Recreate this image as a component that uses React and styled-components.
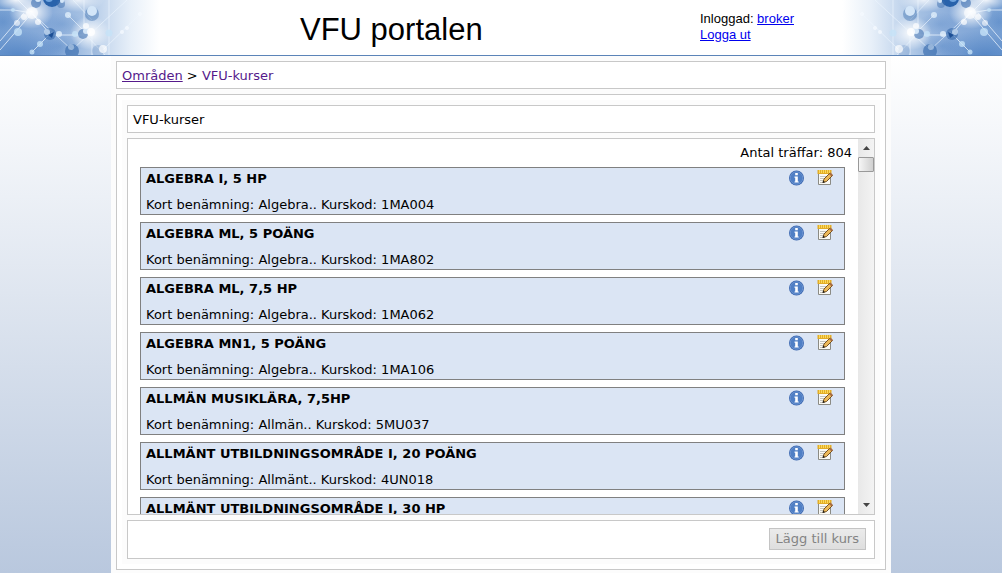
import React, { useRef } from "react";
import styled, { createGlobalStyle } from "styled-components";

const GlobalStyle = createGlobalStyle`
  * {
    box-sizing: border-box;
  }
  html {
    height: 100%;
  }
  body {
    margin: 0;
    min-height: 100%;
    font-family: "DejaVu Sans", Verdana, sans-serif;
    font-size: 13px;
    line-height: 16px;
    color: #000;
  }
`;

const Page = styled.div`
  height: 100vh;
  min-height: 400px;
  overflow: hidden;
  display: flex;
  flex-direction: column;
  background: linear-gradient(#fff 56px, #b9c8de);
`;

const Header = styled.header`
  flex: none;
  display: flex;
  justify-content: space-between;
  height: 56px;
  background: #fff;
  border-bottom: 1px solid #5b84b8;
`;

const Art = styled.svg`
  flex: none;
  width: 168px;
  height: 55px;
  transform: ${(p) => (p.$flip ? "scaleX(-1)" : "none")};
`;

const HeaderInner = styled.div`
  flex: 1;
  max-width: 666px;
  display: flex;
  justify-content: space-between;
  font-family: "Liberation Sans", Arial, sans-serif;
`;

const SiteTitle = styled.h1`
  margin: 0 0 0 132px;
  font-size: 31px;
  line-height: 60px;
  font-weight: normal;
  white-space: nowrap;
`;

const Login = styled.div`
  width: 134px;
  padding-top: 11px;
  font-size: 13px;
  line-height: 16px;

  a {
    color: #0000ee;
  }
`;

const Container = styled.main`
  flex: 1;
  min-height: 0;
  width: 100%;
  max-width: 780px;
  margin: 0 auto;
  padding: 5px 5px 3px;
  display: flex;
  flex-direction: column;
  gap: 5px;
  background: #fcfcfc;
`;

const Box = styled.div`
  border: 1px solid #c8c8c8;
  background: #fff;
`;

const Bar = styled(Box)`
  flex: none;
  padding: 6px 5px 4px;
`;

const Crumb = styled.a`
  color: #551a8b;
  text-decoration: ${(p) => (p.$current ? "none" : "underline")};
`;

const Frame = styled(Box)`
  flex: 1;
  min-height: 0;
  padding: 5px;
  display: flex;
`;

const Panel = styled.section`
  flex: 1;
  min-width: 0;
  padding: 5px;
  display: flex;
  flex-direction: column;
  gap: 5px;
  background: #fcfcfc;
`;

const PanelTitle = styled.h2`
  margin: 0;
  font-size: 13px;
  font-weight: normal;
`;

const ListBox = styled(Box)`
  flex: 1;
  min-height: 0;
  display: flex;
`;

const ListView = styled.div`
  flex: 1;
  min-width: 0;
  overflow-y: auto;
  scrollbar-width: none;
  padding: 6px 0 0 12px;
`;

const Hits = styled.p`
  margin: 0 6px 6px 0;
  text-align: right;
`;

const Courses = styled.ul`
  list-style: none;
  margin: 0 13px 0 0;
  padding: 0;
  display: flex;
  flex-direction: column;
  gap: 7px;
`;

const Course = styled.li`
  display: flex;
  justify-content: space-between;
  height: 48px;
  padding: 2px 11px 0 5px;
  border: 1px solid #808080;
  background: #dbe5f4;
`;

const CourseText = styled.div`
  padding-top: 1px;
`;

const CourseName = styled.h3`
  margin: 0 0 10px;
  font-size: 13px;
  font-weight: bold;
`;

const CourseInfo = styled.p`
  margin: 0;
`;

const Actions = styled.div`
  display: flex;
  gap: 13px;
`;

const IconButton = styled.button`
  width: 16px;
  height: 16px;
  padding: 0;
  border: 0;
  background: none;
  cursor: pointer;

  svg {
    display: block;
  }
`;

const Scrollbar = styled.div`
  flex: none;
  width: 16px;
  display: flex;
  flex-direction: column;
  background: linear-gradient(90deg, #e8e8e8, #f3f3f3);
`;

const ScrollArrow = styled.button`
  height: 18px;
  padding: 0;
  border: 0;
  background: none;
  display: flex;
  align-items: center;
  justify-content: center;
`;

const Track = styled.div`
  flex: 1;
`;

const Thumb = styled.div`
  height: 15px;
  border: 1px solid #999;
  border-radius: 1px;
  background: linear-gradient(90deg, #f6f6f6, #cfcfcf);
`;

const Footer = styled(Box)`
  flex: none;
  display: flex;
  justify-content: flex-end;
  padding: 7px 8px 8px;
`;

const AddButton = styled.button`
  height: 22px;
  padding: 0 6px;
  border: 1px solid #c4c4c4;
  background: linear-gradient(#ebebeb, #dedede);
  color: #838383;
  font: inherit;
`;

const courses = [
  { name: "ALGEBRA I, 5 HP", info: "Kort benämning: Algebra.. Kurskod: 1MA004" },
  { name: "ALGEBRA ML, 5 POÄNG", info: "Kort benämning: Algebra.. Kurskod: 1MA802" },
  { name: "ALGEBRA ML, 7,5 HP", info: "Kort benämning: Algebra.. Kurskod: 1MA062" },
  { name: "ALGEBRA MN1, 5 POÄNG", info: "Kort benämning: Algebra.. Kurskod: 1MA106" },
  { name: "ALLMÄN MUSIKLÄRA, 7,5HP", info: "Kort benämning: Allmän.. Kurskod: 5MU037" },
  { name: "ALLMÄNT UTBILDNINGSOMRÅDE I, 20 POÄNG", info: "Kort benämning: Allmänt.. Kurskod: 4UN018" },
  { name: "ALLMÄNT UTBILDNINGSOMRÅDE I, 30 HP" },
];

// molecule picture, mirrored on the right side of the header
const Molecules = ({ id, flip }) => (
  <Art $flip={flip} viewBox="0 0 168 55" aria-hidden="true">
    <defs>
      <linearGradient id={`${id}-bg`} x1="0" x2="1" y1="0" y2="0">
        <stop offset="0" stopColor="#7aa2d4" />
        <stop offset="0.3" stopColor="#8badda" />
        <stop offset="0.48" stopColor="#a3bfe2" />
        <stop offset="0.62" stopColor="#c6d8ee" />
        <stop offset="0.78" stopColor="#e8f0f9" />
        <stop offset="0.95" stopColor="#fff" />
      </linearGradient>
      <radialGradient id={`${id}-glow`}>
        <stop offset="0" stopColor="#fff" />
        <stop offset="0.35" stopColor="#fff" stopOpacity="0.65" />
        <stop offset="1" stopColor="#fff" stopOpacity="0" />
      </radialGradient>
      <radialGradient id={`${id}-deep`}>
        <stop offset="0" stopColor="#3f76bd" stopOpacity="0.8" />
        <stop offset="1" stopColor="#3f76bd" stopOpacity="0" />
      </radialGradient>
    </defs>
    <rect width="168" height="55" fill={`url(#${id}-bg)`} />
    <ellipse cx="18" cy="56" rx="52" ry="26" fill={`url(#${id}-deep)`} opacity="0.8" />
    <ellipse cx="3" cy="22" rx="16" ry="14" fill={`url(#${id}-deep)`} opacity="0.4" />
    <ellipse cx="62" cy="24" rx="22" ry="12" fill={`url(#${id}-deep)`} opacity="0.3" />
    <ellipse cx="60" cy="46" rx="22" ry="14" fill={`url(#${id}-deep)`} opacity="0.4" />
    <ellipse cx="31" cy="12" rx="22" ry="17" fill={`url(#${id}-glow)`} />
    <ellipse cx="16" cy="0" rx="22" ry="10" fill={`url(#${id}-glow)`} opacity="0.9" />
    <ellipse cx="78" cy="0" rx="26" ry="12" fill={`url(#${id}-glow)`} opacity="0.8" />
    <ellipse cx="90" cy="33" rx="20" ry="17" fill={`url(#${id}-glow)`} />
    <g stroke="#eff7ff" fill="none">
      <path d="M0 10H14L32 13M32 13L0 50M24 13L0 41M32 13L50 34M54 35H84M32 52L52 32M18 0L38 20" strokeOpacity="0.75" />
      <path d="M32 13L72 50M68 15L88 35M73 0L92 20M84 0V34M72 50L87 36" strokeOpacity="0.6" />
      <path d="M109 0V55M92 33V55M127 0L88 36M140 14L103 50M85 34L105 55" strokeOpacity="0.6" />
    </g>
    <g fill="#3e70b0">
      <circle cx="36" cy="3" r="5" fillOpacity="0.6" />
      <circle cx="52" cy="-2" r="9" fill="#2862ab" />
      <circle cx="61" cy="4" r="4" fillOpacity="0.5" />
      <circle cx="50" cy="34" r="6" fillOpacity="0.7" />
      <circle cx="72" cy="51" r="7" fillOpacity="0.7" />
      <circle cx="83" cy="34" r="5" fillOpacity="0.6" />
      <circle cx="92" cy="14" r="7" fillOpacity="0.45" />
      <circle cx="98" cy="51" r="6" fillOpacity="0.2" />
    </g>
    <g fill="#d4e6f8">
      <circle cx="92" cy="11" r="5" />
      <circle cx="49" cy="-2" r="4" fill="#6fa4df" />
      <circle cx="47" cy="32" r="3" fillOpacity="0.7" />
      <path d="M48 35L54 32L52 38z" fill="#1c4f95" />
      <circle cx="71" cy="47" r="3" fillOpacity="0.5" />
      <circle cx="86" cy="31" r="3" />
      <circle cx="38" cy="-1" r="3" />
      <circle cx="62" cy="1" r="2" />
    </g>
    <g fill="#fff">
      <circle cx="32" cy="13" r="6" fillOpacity="0.6" />
      <circle cx="24" cy="17" r="3" fillOpacity="0.7" />
      <circle cx="38" cy="22" r="3" fillOpacity="0.7" />
      <circle cx="17" cy="23" r="3" fillOpacity="0.6" />
      <circle cx="91" cy="32" r="4" fillOpacity="0.8" />
      <circle cx="86" cy="26" r="3" fillOpacity="0.7" />
      <circle cx="103" cy="49" r="4" fillOpacity="0.7" />
    </g>
    <g fill="#c5e2f8" fillOpacity="0.8">
      <circle cx="13" cy="10" r="2" />
      <circle cx="18" cy="32" r="4" />
      <circle cx="40" cy="44" r="3" />
      <circle cx="32" cy="52" r="2.5" />
      <circle cx="59" cy="34" r="3" fill="#e4f1fc" />
      <circle cx="75" cy="34" r="3" />
      <circle cx="68" cy="15" r="3" fill="#e0effb" />
      <circle cx="109" cy="33" r="3.5" />
      <circle cx="122" cy="32" r="2" fill="#f4f9fe" />
      <circle cx="127" cy="28" r="2" fill="#f4f9fe" />
      <circle cx="140" cy="14" r="2" fill="#f4f9fe" />
    </g>
  </Art>
);

const InfoIcon = () => (
  <svg width="16" height="16" viewBox="0 0 16 16">
    <circle cx="8.5" cy="8" r="7.5" fill="#3c68b0" />
    <circle cx="8.5" cy="8" r="6.3" fill="#4f7fc5" stroke="#7299d4" strokeWidth="0.8" />
    <path d="M7.2 3h2.6v2.3H7.2zM6.5 6.500h3.3v4.9h.9v1.2H6.500v-1.200h.7V7.700h-.7z" fill="#fff" />
  </svg>
);

const EditIcon = () => (
  <svg width="16" height="16" viewBox="0 0 16 16">
    <path d="M1.5 3v11.5h12V3z" fill="#fbfaf5" stroke="#8b8b84" />
    <path d="M3 6.5h8M3 8.5h6M3 10.5h4M3 12.5h3" stroke="#c4c4be" />
    <path d="M0.5 0h14v4h-14z" fill="#e3ad26" />
    <path d="M2.5 0v3M4.5 0v3M6.5 0v3M8.5 0v3M10.5 0v3M12.5 0v3" stroke="#ffe56e" strokeWidth="0.8" />
    <path d="M6 12.5l1-3.500 6-6 2.500 2.500-6 6z" fill="#edb95a" stroke="#654315" strokeWidth="0.9" />
    <path d="M12 4l1.5-1.500L16 5l-1.500 1.500z" fill="#a86c40" />
    <path d="M5.5 13l.8-2.500 1.700 1.700z" fill="#1c1c1c" />
  </svg>
);

const App = () => {
  const listRef = useRef(null);

  const scroll = (top) => {
    listRef.current.scrollBy({ top });
  };

  return (
    <>
      <GlobalStyle />
      <Page>
        <Header>
          <Molecules id="left" />
          <HeaderInner>
            <SiteTitle>VFU portalen</SiteTitle>
            <Login>
              Inloggad: <a href="#broker">broker</a>
              <br />
              <a href="#logout">Logga ut</a>
            </Login>
          </HeaderInner>
          <Molecules id="right" flip />
        </Header>
        <Container>
          <Bar as="nav">
            <Crumb href="#areas">Områden</Crumb> &gt;{" "}
            <Crumb href="#courses" $current>VFU-kurser</Crumb>
          </Bar>
          <Frame>
            <Panel>
              <Bar>
                <PanelTitle>VFU-kurser</PanelTitle>
              </Bar>
              <ListBox>
                <ListView ref={listRef}>
                  <Hits>Antal träffar: 804</Hits>
                  <Courses>
                    {courses.map((course) => (
                      <Course key={course.name}>
                        <CourseText>
                          <CourseName>{course.name}</CourseName>
                          {course.info && <CourseInfo>{course.info}</CourseInfo>}
                        </CourseText>
                        <Actions>
                          <IconButton type="button" aria-label="Info"><InfoIcon /></IconButton>
                          <IconButton type="button" aria-label="Redigera"><EditIcon /></IconButton>
                        </Actions>
                      </Course>
                    ))}
                  </Courses>
                </ListView>
                <Scrollbar>
                  <ScrollArrow type="button" aria-label="Upp" onClick={() => scroll(-55)}>
                    <svg width="7" height="4" viewBox="0 0 7 4"><path d="M0 4L3.5 0L7 4z" fill="#444" /></svg>
                  </ScrollArrow>
                  <Track>
                    <Thumb />
                  </Track>
                  <ScrollArrow type="button" aria-label="Ner" onClick={() => scroll(55)}>
                    <svg width="7" height="4" viewBox="0 0 7 4"><path d="M0 0L3.5 4L7 0z" fill="#444" /></svg>
                  </ScrollArrow>
                </Scrollbar>
              </ListBox>
              <Footer>
                <AddButton type="button" disabled>Lägg till kurs</AddButton>
              </Footer>
            </Panel>
          </Frame>
        </Container>
      </Page>
    </>
  );
};

export default App;
